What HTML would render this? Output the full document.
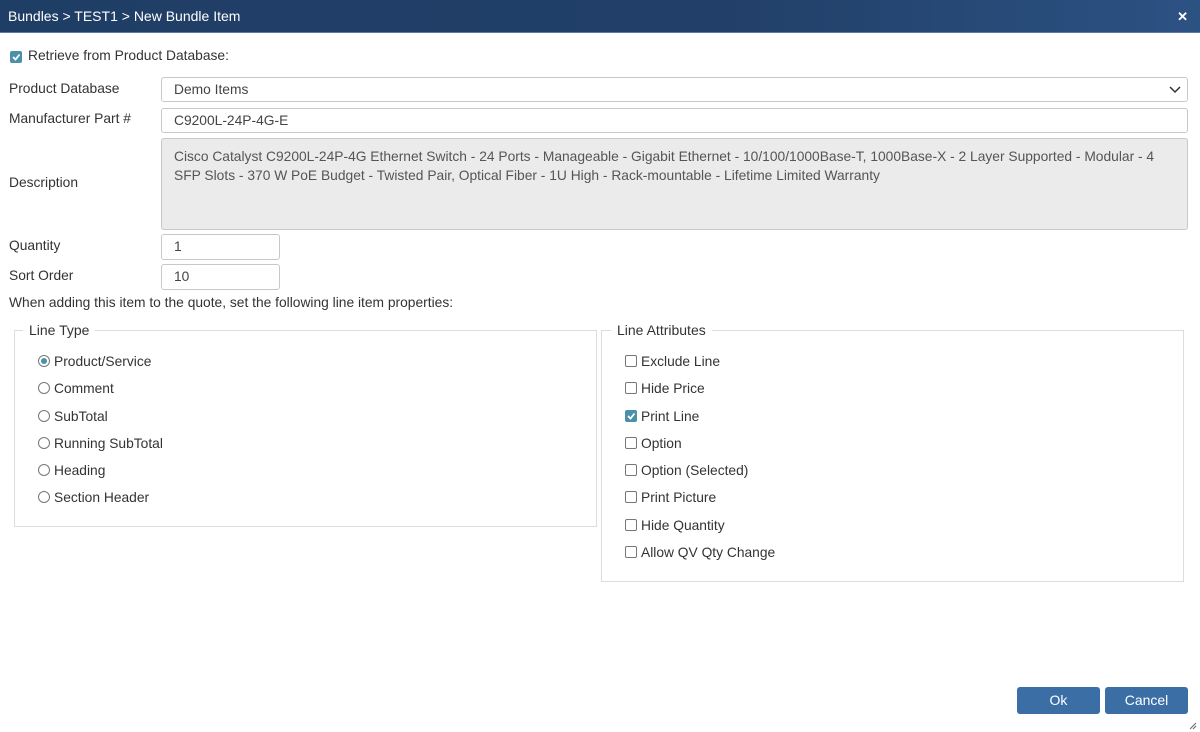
<!DOCTYPE html>
<html><head><style>
*{box-sizing:border-box;margin:0;padding:0}
body{width:1200px;height:732px;background:#fff;font-family:"Liberation Sans",Arial,sans-serif;font-size:13.8px;color:#333;position:relative;overflow:hidden}
.hdr{position:absolute;left:0;top:0;width:1200px;height:33px;background:linear-gradient(90deg,#1f3e66 0%,#213f68 60%,#2c5283 100%);color:#fff;font-size:14px;line-height:33px;padding-left:8px;border-bottom:1px solid #5a7aa0}
.x{position:absolute;right:12px;top:0;color:#fff;font-size:13px;font-weight:bold}
.a{position:absolute;white-space:nowrap}
.in{position:absolute;border:1px solid #c8c8c8;border-radius:3px;background:#fff;padding-left:12px;font-size:13.8px;color:#444}
.cb{position:absolute;width:12px;height:12px;border:1px solid #777;border-radius:2px;background:#fff}
.cb.on{background:#4a90a8;border-color:#4a90a8}
.rd{position:absolute;width:12px;height:12px;border:1px solid #777;border-radius:50%;background:#fff}
.rd.on::after{content:"";position:absolute;left:2px;top:2px;width:6px;height:6px;border-radius:50%;background:#4a90a8}
.fs{position:absolute;border:1px solid #ddd}
.lg{position:absolute;background:#fff;padding:0 6px;font-size:14px}
.btn{position:absolute;top:687px;width:83px;height:27px;background:#3b6ea5;border-radius:3px;color:#fff;text-align:center;line-height:27px;font-size:14px}
</style></head><body>
<div class="hdr">Bundles &gt; TEST1 &gt; New Bundle Item<span class="x">✕</span></div>
<div class="cb on" style="left:10px;top:51px"><svg width="10" height="10" style="position:absolute;left:0;top:0"><path d="M2 5 L4.5 7.5 L8.5 2.5" stroke="#fff" stroke-width="1.8" fill="none"/></svg></div>
<div class="a" style="left:28px;top:48px">Retrieve from Product Database:</div>
<div class="a" style="left:9px;top:81px">Product Database</div>
<div class="a" style="left:9px;top:111px">Manufacturer Part #</div>
<div class="a" style="left:9px;top:175px">Description</div>
<div class="a" style="left:9px;top:238px">Quantity</div>
<div class="a" style="left:9px;top:268px">Sort Order</div>
<div class="in" style="left:161px;top:77px;width:1027px;height:25px;line-height:23px">Demo Items<svg width="12" height="8" style="position:absolute;right:6px;top:8px"><path d="M1 1 L6 6 L11 1" stroke="#333" stroke-width="1.5" fill="none"/></svg></div>
<div class="in" style="left:161px;top:108px;width:1027px;height:25px;line-height:23px">C9200L-24P-4G-E</div>
<div class="in" style="left:161px;top:138px;width:1027px;height:92px;background:#ebebeb;padding:8px 12px;line-height:19px;color:#555">Cisco Catalyst C9200L-24P-4G Ethernet Switch - 24 Ports - Manageable - Gigabit Ethernet - 10/100/1000Base-T, 1000Base-X - 2 Layer Supported - Modular - 4 SFP Slots - 370 W PoE Budget - Twisted Pair, Optical Fiber - 1U High - Rack-mountable - Lifetime Limited Warranty</div>
<div class="in" style="left:161px;top:234px;width:119px;height:26px;line-height:24px">1</div>
<div class="in" style="left:161px;top:264px;width:119px;height:26px;line-height:24px">10</div>
<div class="a" style="left:9px;top:295px">When adding this item to the quote, set the following line item properties:</div>
<div class="fs" style="left:14px;top:330px;width:583px;height:197px"></div>
<div class="lg" style="left:23px;top:322px">Line Type</div>
<div class="fs" style="left:601px;top:330px;width:583px;height:252px"></div>
<div class="lg" style="left:611px;top:322px">Line Attributes</div>
<div class="rd on" style="left:38px;top:355px"></div><div class="a" style="left:54px;top:354px">Product/Service</div>
<div class="rd" style="left:38px;top:382px"></div><div class="a" style="left:54px;top:381px">Comment</div>
<div class="rd" style="left:38px;top:410px"></div><div class="a" style="left:54px;top:409px">SubTotal</div>
<div class="rd" style="left:38px;top:437px"></div><div class="a" style="left:54px;top:436px">Running SubTotal</div>
<div class="rd" style="left:38px;top:464px"></div><div class="a" style="left:54px;top:463px">Heading</div>
<div class="rd" style="left:38px;top:491px"></div><div class="a" style="left:54px;top:490px">Section Header</div>
<div class="cb" style="left:625px;top:355px"></div><div class="a" style="left:641px;top:354px">Exclude Line</div>
<div class="cb" style="left:625px;top:382px"></div><div class="a" style="left:641px;top:381px">Hide Price</div>
<div class="cb on" style="left:625px;top:410px"><svg width="10" height="10" style="position:absolute;left:0;top:0"><path d="M2 5 L4.5 7.5 L8.5 2.5" stroke="#fff" stroke-width="1.8" fill="none"/></svg></div><div class="a" style="left:641px;top:409px">Print Line</div>
<div class="cb" style="left:625px;top:437px"></div><div class="a" style="left:641px;top:436px">Option</div>
<div class="cb" style="left:625px;top:464px"></div><div class="a" style="left:641px;top:463px">Option (Selected)</div>
<div class="cb" style="left:625px;top:491px"></div><div class="a" style="left:641px;top:490px">Print Picture</div>
<div class="cb" style="left:625px;top:519px"></div><div class="a" style="left:641px;top:518px">Hide Quantity</div>
<div class="cb" style="left:625px;top:546px"></div><div class="a" style="left:641px;top:545px">Allow QV Qty Change</div>
<div class="btn" style="left:1017px">Ok</div>
<div class="btn" style="left:1105px">Cancel</div>
<svg width="8" height="8" style="position:absolute;left:1189px;top:722px"><path d="M7 1 L1 7 M7 4 L4 7" stroke="#666" stroke-width="1"/></svg>
</body></html>
